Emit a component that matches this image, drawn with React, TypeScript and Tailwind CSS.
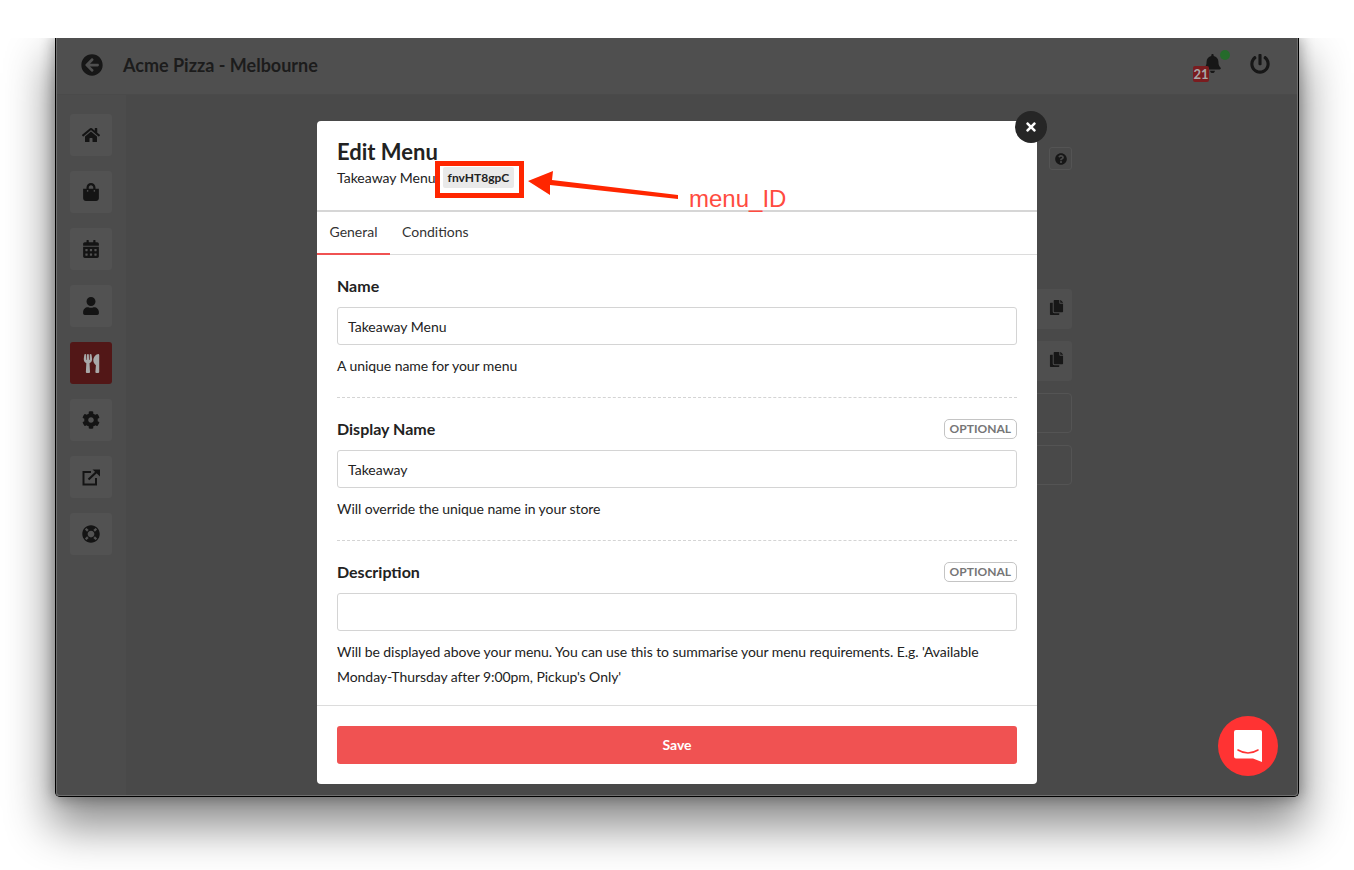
import { FaArrowCircleLeft, FaBell, FaCalendarAlt, FaCog, FaCopy, FaHome, FaLifeRing, FaPowerOff, FaQuestionCircle, FaShoppingBag, FaTimes, FaUser, FaUtensils } from 'react-icons/fa';
import type { ReactNode } from 'react';

function ExternalIcon() {
  return (
    <svg width="18" height="17" viewBox="0 0 18 17" fill="none">
      <path d="M9 3H1.5V15.5H14V9" stroke="#141414" strokeWidth="2" />
      <path d="M6.5 10.5L15 2.5" stroke="#141414" strokeWidth="2.2" />
      <path d="M10.5 0.5H18V7.5Z" fill="#141414" />
    </svg>
  );
}

function Optional() {
  return (
    <span className="h-5 px-[5px] rounded-[5px] border border-[#c4c4c4] text-[12px] leading-[18px] font-bold text-[#767676]">
      OPTIONAL
    </span>
  );
}

function Field({ label, value, help, optional, last }: { label: string; value: string; help: ReactNode; optional?: boolean; last?: boolean }) {
  return (
    <div className={last ? 'pt-[21px]' : 'pt-[21px] pb-[19px] border-b border-dashed border-[#d4d4d4]'}>
      <div className="flex items-center justify-between h-5">
        <span className="text-[16px] font-bold text-[#222]">{label}</span>
        {optional && <Optional />}
      </div>
      <div className="mt-[11px] h-[38px] rounded-[3px] border border-[#d4d4d4] px-[10px] flex items-center text-[14px] text-[#222]">
        {value}
      </div>
      <p className="mt-2 text-[14px] leading-[25px] tracking-[-0.06px] text-[#222]">{help}</p>
    </div>
  );
}

export default function App() {
  const sideItems = [
    <FaHome size={18} />,
    <FaShoppingBag size={18} />,
    <FaCalendarAlt size={18} />,
    <FaUser size={18} />,
    <FaUtensils size={19} color="#a8a8a8" />,
    <FaCog size={18} />,
    <ExternalIcon />,
    <FaLifeRing size={18} />,
  ];

  return (
    <div className="w-[1354px] h-[870px] bg-white overflow-hidden pt-[38px] font-['Lato','Noto_Sans',sans-serif]">
      <div className="h-[832px] overflow-hidden pl-[55px] relative">
        {/* dimmed browser window */}
        <div className="relative w-[1244px] h-[759px] rounded-b-[5px] bg-[#494949] border-x border-b border-black shadow-[0_25px_45px_5px_rgba(0,0,0,0.45),0_0_14px_2px_rgba(0,0,0,0.3)] flex flex-col">
          <header className="h-[57px] shrink-0 bg-[#4f4f4f] border-b border-[#4a4a4a] flex items-center pl-[25px] pr-[28px] text-[#171717]">
            <FaArrowCircleLeft size={22} className="-mt-0.5" />
            <span className="ml-[20px] -mt-0.5 text-[18px] font-bold text-[#1c1c1c]">Acme Pizza - Melbourne</span>
            <div className="ml-auto relative mr-[37px] w-5 h-5 -mt-0.5">
              <FaBell size={19} className="absolute left-[10px] top-[-1px]" />
              <span className="absolute left-[27px] top-[-5px] w-[10px] h-[10px] rounded-full bg-[#256b2b]" />
              <span className="absolute left-0 top-[11px] w-4 h-4 rounded-[2px] bg-[#7a1c1f] text-[#a8a8a8] text-[13px] leading-4 font-bold text-center">21</span>
            </div>
            <FaPowerOff size={20} className="-mt-1" />
          </header>
          <div className="flex flex-1">
            <aside className="w-[70px] bg-[#4c4c4c] pt-[19px] pl-[14px] flex flex-col gap-[15px]">
              {sideItems.map((icon, i) => (
                <div
                  key={i}
                  className={`w-[42px] h-[42px] rounded-[3px] flex items-center justify-center text-[#141414] ${i === 4 ? 'bg-[#521717]' : 'bg-[#525252]'}`}
                >
                  {icon}
                </div>
              ))}
            </aside>
            <main className="flex-1 flex justify-end pr-[226px]">
              <div className="w-[60px] flex flex-col items-end pt-[52px] text-[#171717]">
                <div className="w-[23px] h-[23px] rounded-[3px] border border-[#545454] flex items-center justify-center">
                  <FaQuestionCircle size={12} />
                </div>
                <div className="mt-[119px] w-[60px] h-[40px] bg-[#4f4f4f] rounded-r-[3px] flex items-center justify-end pr-[8px] pb-1">
                  <FaCopy size={15} />
                </div>
                <div className="mt-[12px] w-[60px] h-[40px] bg-[#4f4f4f] rounded-r-[3px] flex items-center justify-end pr-[8px] pb-1">
                  <FaCopy size={15} />
                </div>
                <div className="mt-[12px] w-[60px] h-[40px] border border-[#545454] rounded-r-[4px]" />
                <div className="mt-[12px] w-[60px] h-[40px] border border-[#545454] rounded-r-[4px]" />
              </div>
            </main>
          </div>
          {/* inner light edge of the window */}
          <div className="absolute inset-0 pointer-events-none border-x border-b border-[#6e6e6e] rounded-b-[4px]" />
        </div>

        {/* modal */}
        <div className="absolute left-[317px] top-[83px] w-[720px] h-[663px] bg-white rounded-[4px] flex flex-col text-[#222]">
          <div className="h-[91px] shrink-0 border-b-2 border-[#d6d6d6] pt-[18px] pl-5">
            <h2 className="text-[22px] leading-[26px] font-bold text-[#222]">Edit Menu</h2>
            <div className="flex items-center text-[14px] h-6">
              <span>Takeaway Menu</span>
              <span className="ml-[7px] h-[21px] px-[5px] rounded-[2px] bg-[#e9e9e9] text-[12px] leading-[21px] font-bold">fnvHT8gpC</span>
            </div>
          </div>
          <div className="h-[43px] shrink-0 border-b border-[#dcdcdc] flex text-[14px] text-[#333]">
            <div className="w-[73px] h-[43px] text-center leading-[39px] border-b-2 border-[#f05252]">General</div>
            <div className="ml-3 leading-[39px]">Conditions</div>
          </div>
          <div className="flex-1 px-5">
            <Field label="Name" value="Takeaway Menu" help="A unique name for your menu" />
            <Field label="Display Name" value="Takeaway" help="Will override the unique name in your store" optional />
            <Field
              label="Description"
              value=""
              help="Will be displayed above your menu. You can use this to summarise your menu requirements. E.g. 'Available Monday-Thursday after 9:00pm, Pickup's Only'"
              optional
              last
            />
          </div>
          <div className="h-[79px] shrink-0 border-t border-[#dcdcdc] px-5 pt-5">
            <button className="w-full h-[38px] pb-[2px] rounded-[3px] bg-[#f05252] text-white text-[14px] font-bold">Save</button>
          </div>
        </div>

        {/* close button */}
        <div className="absolute left-[1015px] top-[73px] w-8 h-8 rounded-full bg-[#262626] flex items-center justify-center text-white">
          <FaTimes size={14} />
        </div>

        {/* annotation */}
        <div className="absolute left-[435px] top-[123px] w-[89px] h-[37px] border-[5px] border-[#ff2600]" />
        <svg className="absolute left-[520px] top-[130px]" width="170" height="45" viewBox="0 0 170 45">
          <path d="M8 13L33 3L32 12L158 27L158 31L30 17L30 27Z" fill="#ff2600" />
        </svg>
        <span className="absolute left-[689px] top-[147px] text-[24px] leading-[28px] text-[#ff4b40] font-['Liberation_Sans',sans-serif]">menu_ID</span>

        {/* chat launcher */}
        <div className="absolute left-[1218px] top-[678px] w-[60px] h-[60px] rounded-full bg-[#ff3333] flex items-center justify-center">
          <svg width="28" height="32" viewBox="0 0 28 32">
            <path d="M2 0H26A2 2 0 0 1 28 2V32L19 28.5H2A2 2 0 0 1 0 26.5V2A2 2 0 0 1 2 0Z" fill="#fff" />
            <path d="M4 20Q14 26 24 20" fill="none" stroke="#ff3333" strokeWidth="1.6" strokeLinecap="round" />
          </svg>
        </div>
      </div>
    </div>
  );
}
